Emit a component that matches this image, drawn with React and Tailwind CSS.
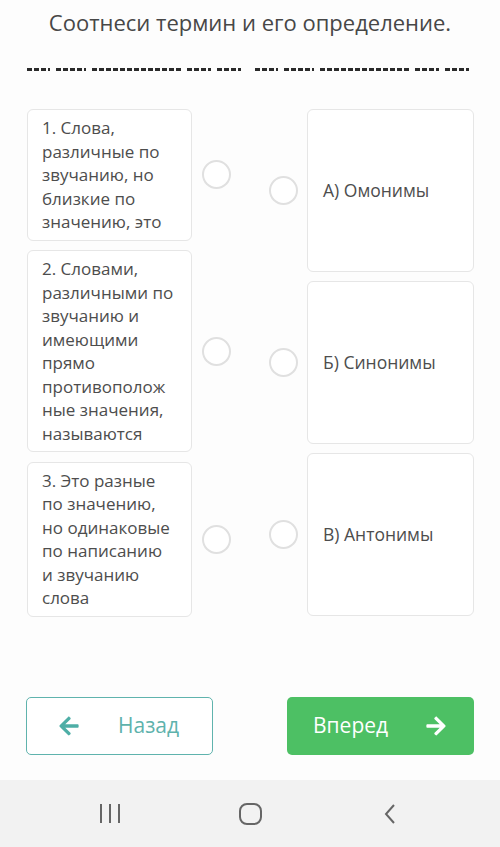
import React from "react";
import { FaArrowLeft, FaArrowRight } from "react-icons/fa";

const terms = [
  "1. Слова, различные по звучанию, но близкие по значению, это",
  "2. Словами, различными по звучанию и имеющими прямо противоположные значения, называются",
  "3. Это разные по значению, но одинаковые по написанию и звучанию слова",
];

const answers = ["А) Омонимы", "Б) Синонимы", "В) Антонимы"];

// redacted text under the title, drawn as dashed words
const words = [23, 30, 89, 24, 24];

const Circle = () => (
  <div className="w-[29px] h-[29px] shrink-0 rounded-full border-2 border-[#e0e0e0] bg-white" />
);

const DashRow = () => (
  <div className="flex items-center gap-[6px]">
    {words.map((w, i) => (
      <span
        key={i}
        style={{ width: w }}
        className="h-[3px] bg-[repeating-linear-gradient(90deg,#2a2a2a_0_5px,transparent_5px_7px)]"
      />
    ))}
  </div>
);

const App = () => {
  return (
    <div
      className="w-[500px] h-[847px] bg-[#fdfdfd] flex flex-col"
      style={{ fontFamily: '"Open Sans", sans-serif' }}
    >
      <h1 className="pt-[8px] text-center text-[22px] leading-[28px] text-[#474747]">
        Соотнеси термин и его определение.
      </h1>

      <div className="mt-[32px] pl-[27px] flex gap-[14px]">
        <DashRow />
        <DashRow />
      </div>

      {/* matching area */}
      <div className="mt-[38px] pl-[27px] flex">
        <div className="flex flex-col gap-[9.5px] w-[231px]">
          {terms.map((t) => (
            <div key={t} className="flex items-center gap-[10px]">
              <div className="w-[165px] bg-white border border-[#e6e6e6] rounded-[6px] pl-[14px] pr-[16px] py-[6px] text-[17px] leading-[23.5px] text-[#4d4d4d] break-words">
                {t}
              </div>
              <Circle />
            </div>
          ))}
        </div>
        <div className="ml-[11px] flex flex-col gap-[9.5px]">
          {answers.map((a) => (
            <div key={a} className="flex items-center gap-[9px]">
              <Circle />
              <div className="w-[167px] h-[162.5px] bg-white border border-[#e6e6e6] rounded-[6px] pl-[15px] flex items-center text-[17.5px] text-[#4d4d4d]">
                {a}
              </div>
            </div>
          ))}
        </div>
      </div>

      {/* buttons */}
      <div className="mt-auto px-[26px] flex justify-between">
        <button className="w-[187px] h-[58px] border border-[#5fb3ad] rounded-[5px] bg-white flex items-center pl-[31px] text-[#5eb2ac]">
          <FaArrowLeft className="text-[22px] text-[#4eaea6]" />
          <span className="ml-[38px] text-[21px]">Назад</span>
        </button>
        <button className="w-[187px] h-[58px] rounded-[5px] bg-[#4dc064] flex items-center justify-between pl-[26px] pr-[27px] text-white">
          <span className="text-[21px]">Вперед</span>
          <FaArrowRight className="text-[22px]" />
        </button>
      </div>

      {/* android nav bar */}
      <div className="mt-[25px] h-[67px] bg-[#f2f2f2] flex items-center px-[40px]">
        <div className="w-[140px] flex justify-center gap-[7px]">
          <span className="w-[2px] h-[19px] bg-[#666]" />
          <span className="w-[2px] h-[19px] bg-[#666]" />
          <span className="w-[2px] h-[19px] bg-[#666]" />
        </div>
        <div className="w-[140px] flex justify-center">
          <div className="w-[23px] h-[22px] border-2 border-[#666] rounded-[8px]" />
        </div>
        <div className="w-[140px] flex justify-center">
          <svg width="14" height="22" viewBox="0 0 14 22">
            <path d="M11 2 L3 11 L11 20" fill="none" stroke="#666" strokeWidth="2" />
          </svg>
        </div>
      </div>
    </div>
  );
};

export default App;
